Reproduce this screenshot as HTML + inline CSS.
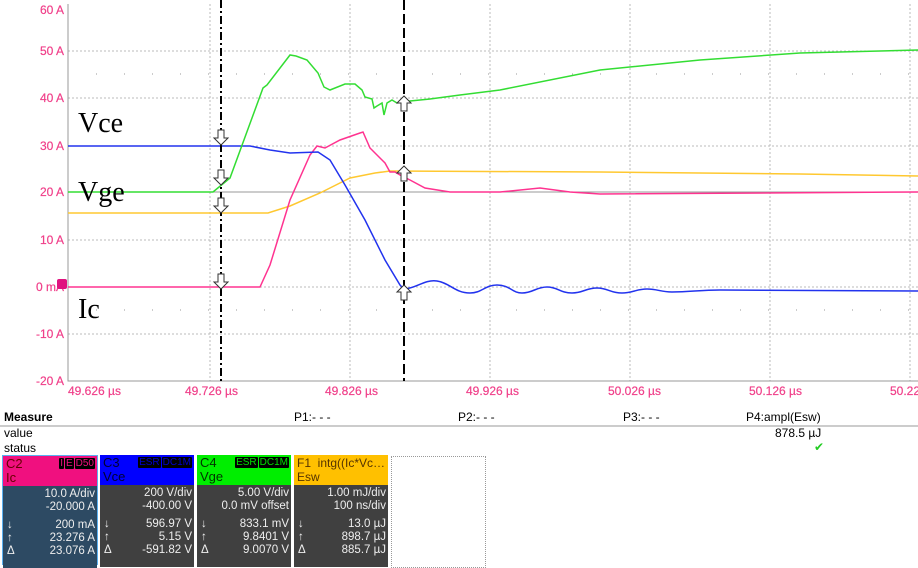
<!DOCTYPE html>
<html><head><meta charset="utf-8"><style>
body{margin:0;width:918px;height:560px;overflow:hidden;background:#fff;font-family:"Liberation Sans",Arial,sans-serif;position:relative}
.a{position:absolute;white-space:nowrap}
.box{position:absolute;top:455px;width:94px;height:110px;font-size:11.5px;line-height:13px}
.hd{height:30px;padding:1px 3px;box-sizing:border-box;position:relative;font-size:13px;line-height:14px;white-space:nowrap;overflow:hidden}
.bd{height:80px;color:#eee;text-align:right;padding:2px 2px 0 4px;position:relative}
.tag{position:absolute;top:2px;right:2px;font-size:10px;line-height:11px}
.tag span{background:#000;padding:0 1px;margin-left:1px;border-radius:1px}
.ar{position:absolute;left:4px}
</style></head><body>
<svg class="a" style="left:0;top:0" width="918" height="400">
<g stroke="#bbb" stroke-width="1" stroke-dasharray="2,2">
<line x1="68" y1="51" x2="918" y2="51"/><line x1="68" y1="98" x2="918" y2="98"/><line x1="68" y1="146" x2="918" y2="146"/><line x1="68" y1="240" x2="918" y2="240"/><line x1="68" y1="334" x2="918" y2="334"/>
<line x1="210" y1="4" x2="210" y2="381"/><line x1="350" y1="4" x2="350" y2="381"/><line x1="490" y1="4" x2="490" y2="381"/><line x1="630" y1="4" x2="630" y2="381"/><line x1="770" y1="4" x2="770" y2="381"/><line x1="910" y1="4" x2="910" y2="381"/>
</g>
<g stroke="#999" stroke-width="1" stroke-dasharray="1,27" >
<line x1="96" y1="74" x2="918" y2="74"/><line x1="96" y1="310" x2="918" y2="310"/>
</g>
<line x1="68" y1="192" x2="918" y2="192" stroke="#999"/>
<line x1="68" y1="287" x2="918" y2="287" stroke="#bbb" stroke-dasharray="2,2"/>
<polyline fill="none" stroke="#999" points="68,4 68,381 918,381"/>
<g font-size="12" fill="#f0408a" text-anchor="end" stroke="#f0408a" stroke-width="0.2">
<text x="64" y="14">60 A</text><text x="64" y="55">50 A</text><text x="64" y="102">40 A</text><text x="64" y="150">30 A</text><text x="64" y="196">20 A</text><text x="64" y="244">10 A</text><text x="64" y="291">0 mA</text><text x="64" y="338">-10 A</text><text x="64" y="385">-20 A</text>
</g>
<g font-size="12" fill="#f0408a" stroke="#f0408a" stroke-width="0.2">
<text x="68" y="395">49.626 µs</text><text x="185" y="395">49.726 µs</text><text x="325" y="395">49.826 µs</text><text x="466" y="395">49.926 µs</text><text x="608" y="395">50.026 µs</text><text x="749" y="395">50.126 µs</text><text x="890" y="395">50.22</text>
</g>
<polyline fill="none" stroke="#ffc830" stroke-width="1.5" points="68,213 268,213 290,206 320,193 350,178 375,173 390,171 600,172 800,174 918,176"/>
<polyline fill="none" stroke="#ff3390" stroke-width="1.5" points="68,287 260,287 270,265 290,200 310,155 317,146 325,148 340,140 360,133 363,132 370,148 380,158 385,163 390,172 395,172 400,175 410,180 425,188 450,192 500,192 540,188 570,192 600,194 918,192"/>
<path fill="none" stroke="#2233ee" stroke-width="1.5" d="M68,146L250,146L270,150L290,153L318,152L330,160L345,185L365,220L385,260L400,285L404,289 C415,289 425,279 437,281 C450,283 455,293 470,293 C482,293 485,285 497,285 C510,285 512,293 522,293 C533,293 536,287 547,287 C558,287 560,293 572,293 C583,293 586,288 597,288 C608,288 610,293 622,293 C633,293 636,289 647,289 C658,289 660,292 672,292 C690,292 700,290 720,290 C760,290 800,291 918,291"/>
<polyline fill="none" stroke="#33dd33" stroke-width="1.5" points="68,192 213,192 230,178 263,88 267,85 290,55 296,56 307,60 318,73 324,87 330,90 345,84 355,84 362,90 365,97 372,99 374,108 377,106 382,103 384,115 387,103 392,100 397,103 404,102 410,101 430,99 460,95 500,90 600,70 700,60 800,53 918,50"/>
<line x1="221" y1="0" x2="221" y2="381" stroke="#000" stroke-width="2" stroke-dasharray="8,3,2,3"/>
<line x1="404" y1="0" x2="404" y2="381" stroke="#000" stroke-width="2" stroke-dasharray="10,4"/>
<g fill="#fff" stroke="#333" stroke-width="1">
<path d="M218,130h6v8h4l-7,7l-7,-7h4z"/><path d="M218,170h6v8h4l-7,7l-7,-7h4z"/><path d="M218,198h6v8h4l-7,7l-7,-7h4z"/><path d="M218,274h6v8h4l-7,7l-7,-7h4z"/>
<path d="M401,111h6v-8h4l-7,-7l-7,7h4z"/><path d="M401,181h6v-8h4l-7,-7l-7,7h4z"/><path d="M401,300h6v-8h4l-7,-7l-7,7h4z"/>
</g>
<rect x="57" y="279" width="10" height="10" rx="2" fill="#e0127f"/>
<g font-family="Liberation Serif,serif" font-size="28" fill="#000"><text x="78" y="132">Vce</text><text x="78" y="201">Vge</text><text x="78" y="318">Ic</text></g>
</svg>
<div class="a" style="left:4px;top:410px;font-size:12px;font-weight:bold">Measure</div>
<div class="a" style="left:294px;top:410px;font-size:12px">P1:- - -</div>
<div class="a" style="left:458px;top:410px;font-size:12px">P2:- - -</div>
<div class="a" style="left:623px;top:410px;font-size:12px">P3:- - -</div>
<div class="a" style="left:746px;top:410px;font-size:12px">P4:ampl(Esw)</div>
<div class="a" style="left:0;top:425px;width:918px;height:2px;background:#ccc"></div>
<div class="a" style="left:4px;top:426px;font-size:12px">value</div>
<div class="a" style="left:4px;top:441px;font-size:12px">status</div>
<div class="a" style="left:775px;top:426px;font-size:12px">878.5 µJ</div>
<div class="a" style="left:814px;top:440px;font-size:12px;color:#2c2">✔</div>
<div class="box" style="left:2px;border:1px solid #5ab0f0;box-sizing:border-box;width:96px"><div class="hd" style="background:#f0107f;color:#600">C2<br>Ic<div class="tag" style="color:#f0107f"><span>I</span><span>E</span><span>D50</span></div></div><div class="bd" style="background:#2d4a63">10.0 A/div<br>-20.000 A<div style="height:5px"></div><span class="ar">↓</span>200 mA<br><span class="ar">↑</span>23.276 A<br><span class="ar">Δ</span>23.076 A</div></div>
<div class="box" style="left:100px"><div class="hd" style="background:#0000ff;color:#003"><span>C3</span><br>Vce<div class="tag" style="color:#0000cc"><span>ESR</span><span>DC1M</span></div></div><div class="bd" style="background:#404040">200 V/div<br>-400.00 V<div style="height:5px"></div><span class="ar">↓</span>596.97 V<br><span class="ar">↑</span>5.15 V<br><span class="ar">Δ</span>-591.82 V</div></div>
<div class="box" style="left:197px"><div class="hd" style="background:#00ee00;color:#030">C4<br>Vge<div class="tag" style="color:#00dd00"><span>ESR</span><span>DC1M</span></div></div><div class="bd" style="background:#404040">5.00 V/div<br>0.0 mV offset<div style="height:5px"></div><span class="ar">↓</span>833.1 mV<br><span class="ar">↑</span>9.8401 V<br><span class="ar">Δ</span>9.0070 V</div></div>
<div class="box" style="left:294px"><div class="hd" style="background:#ffc000;color:#530;font-size:12px">F1&nbsp; intg((Ic*Vc…<br>Esw</div><div class="bd" style="background:#404040">1.00 mJ/div<br>100 ns/div<div style="height:5px"></div><span class="ar">↓</span>13.0 µJ<br><span class="ar">↑</span>898.7 µJ<br><span class="ar">Δ</span>885.7 µJ</div></div>
<div class="a" style="left:391px;top:456px;width:93px;height:110px;border:1px dotted #999"></div>
</body></html>
